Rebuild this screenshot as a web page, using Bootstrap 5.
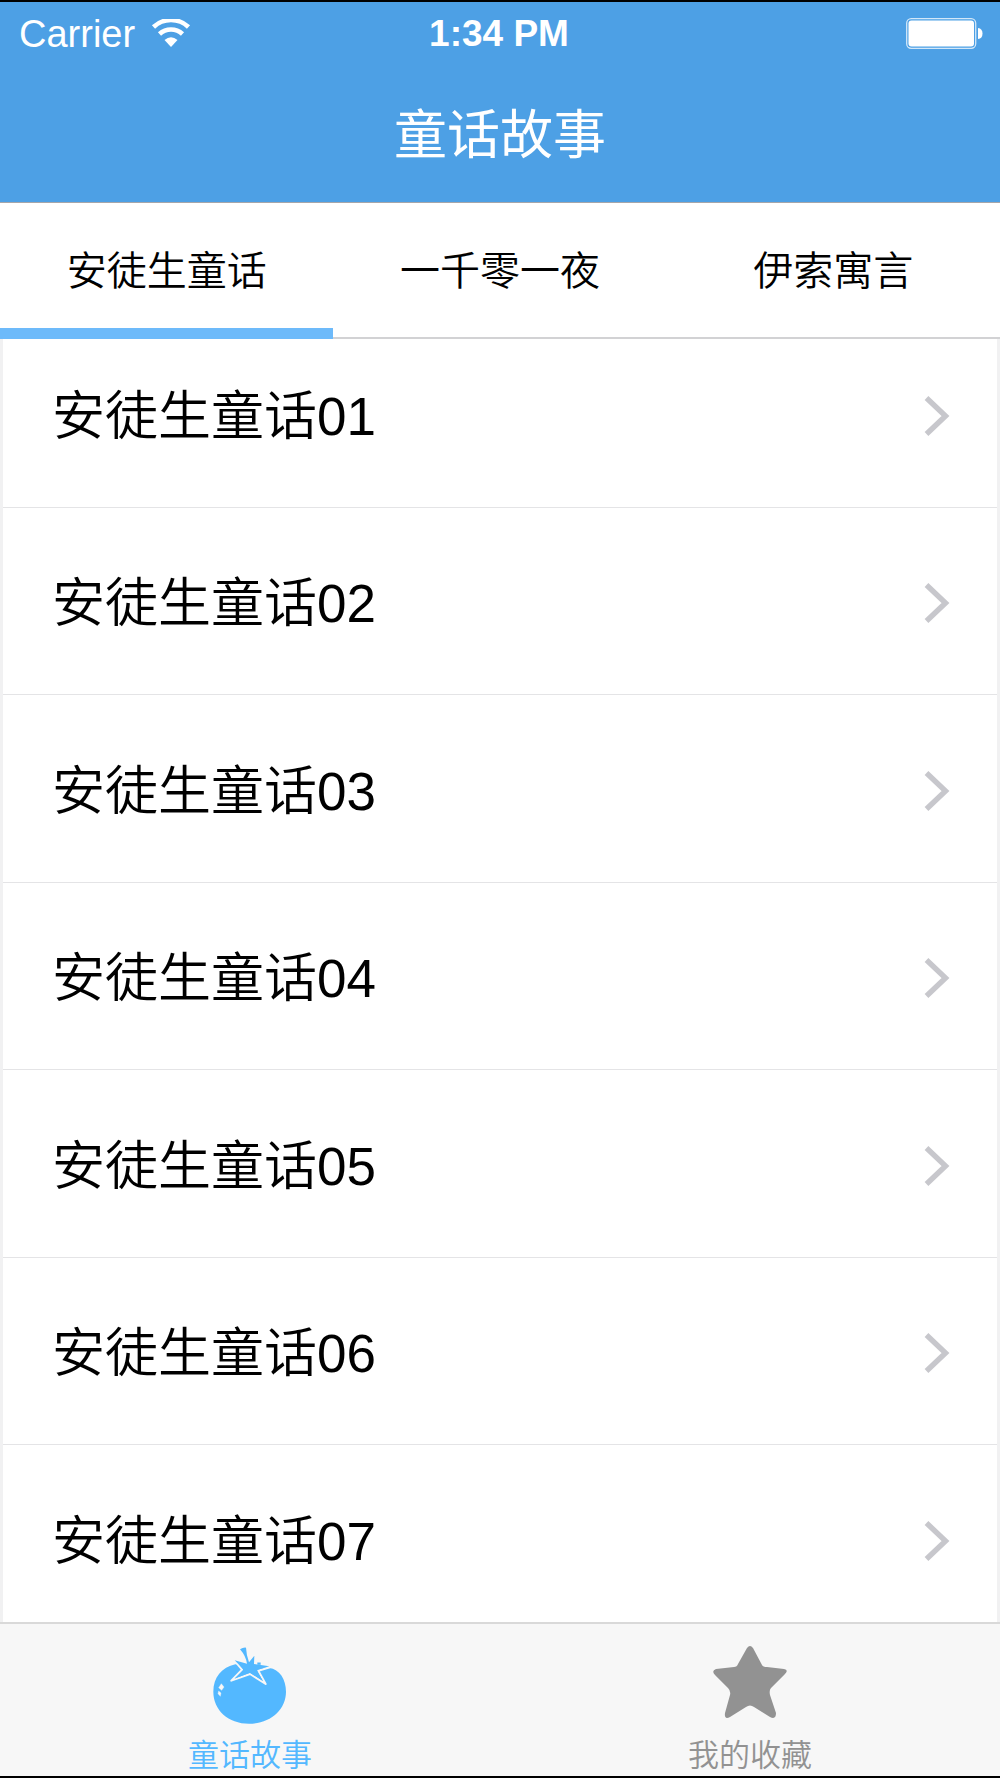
<!DOCTYPE html>
<html lang="zh-CN">
<head>
<meta charset="utf-8">
<meta name="viewport" content="width=device-width, initial-scale=1">
<title>童话故事</title>
<link href="https://cdn.jsdelivr.net/npm/bootstrap@5.3.0/dist/css/bootstrap.min.css" rel="stylesheet">
<style>
body { font-family: "Liberation Sans", "Noto Sans CJK SC", sans-serif; color: #000; background: #fff; }
.app-shell { border-top: 2px solid #000; border-bottom: 2px solid #000; }
.app-header { background: #4da0e5; border-bottom: 1px solid #a6a6aa; }
.status-row { height: 64px; font-size: 37px; line-height: 64px; padding: 0 17px 0 19px; }
.carrier-name { font-size: 38px; }
.status-row svg { display: block; }
.app-title { font-size: 53px; line-height: 64px; padding: 38px 0 34px; font-weight: 400; }
.story-tabs { border-bottom: 2px solid #d2d2d4; }
.story-tab { height: 134px; padding: 2px 0 0; border: 0; background: none; color: #000; font-size: 40px; line-height: 48px; font-weight: 350; }
.story-tab.active { box-shadow: inset 0 -9px #6dbafa; border-bottom: 2px solid #6dbafa; height: 136px; margin-bottom: -2px; }
/* The list is shown scrolled a little way down */
.story-list { border: solid #f1f1f2; border-width: 0 3px; font-weight: 350; }
.story-link { height: 187px; padding: 6px 47px 0 49px; border-bottom: 1px solid #e4e4e6; color: #000; font-size: 53px; line-height: 64px; }
.story-link:nth-child(odd) { height: 188px; }
.story-link:first-child { margin-top: -19px; }
.tab-bar { background: #f7f7f7; border-top: 2px solid #d9d9d9; height: 154px; }
.tab-bar a { color: #929292; font-size: 31px; line-height: 36px; padding-top: 21px; gap: 13px; font-weight: 350; }
.tab-bar a.active { color: #53b8ff; }
</style>
<script src="https://cdn.jsdelivr.net/npm/bootstrap@5.3.0/dist/js/bootstrap.bundle.min.js"></script>
</head>
<body>
<svg class="d-none" aria-hidden="true">
  <symbol id="chevron" viewBox="0 0 26 42"><path d="M2.500 2L21.500 20L2.500 38" fill="none" stroke="#c7c7cc" stroke-width="5.400"/></symbol>
</svg>
<div class="app-shell vh-100 d-flex flex-column overflow-hidden">
  <header class="app-header text-white flex-shrink-0">
    <div class="status-row row g-0 align-items-center">
      <div class="col d-flex align-items-center gap-3">
        <span class="carrier-name">Carrier</span>
        <svg width="40" height="30" viewBox="0 0 40 30" aria-hidden="true">
          <path d="M2.500 8A25.500 25.500 0 0 1 37.500 8M8.500 15A17 17 0 0 1 31.500 15" fill="none" stroke="#fff" stroke-width="4.600"/>
          <path d="M13.500 21Q20 15.500 26.500 21L20 28Z" fill="#fff"/>
        </svg>
      </div>
      <div class="col-auto fw-bold pe-1">1:34 PM</div>
      <div class="col d-flex justify-content-end">
        <svg width="77" height="33" viewBox="0 0 77 33" aria-label="Battery">
          <rect x=".7" y=".7" width="69" height="29.600" rx="4.500" fill="none" stroke="#fff" stroke-opacity=".75" stroke-width="1.300"/>
          <rect x="2.500" y="2.500" width="65.500" height="26" rx="3" fill="#fff"/>
          <path d="M72 10Q76.500 10.500 76.500 15.500T72 21Z" fill="#fff"/>
        </svg>
      </div>
    </div>
    <h1 class="app-title text-center m-0">童话故事</h1>
  </header>

  <nav class="story-tabs d-flex flex-shrink-0" aria-label="故事分类">
    <button type="button" class="story-tab active col-4">安徒生童话</button>
    <button type="button" class="story-tab col-4">一千零一夜</button>
    <button type="button" class="story-tab col-4">伊索寓言</button>
  </nav>

  <main class="story-list flex-fill overflow-hidden">
    <a href="#" class="story-link d-flex align-items-center justify-content-between text-decoration-none">安徒生童话01<svg width="26" height="42" aria-hidden="true"><use href="#chevron"/></svg></a>
    <a href="#" class="story-link d-flex align-items-center justify-content-between text-decoration-none">安徒生童话02<svg width="26" height="42" aria-hidden="true"><use href="#chevron"/></svg></a>
    <a href="#" class="story-link d-flex align-items-center justify-content-between text-decoration-none">安徒生童话03<svg width="26" height="42" aria-hidden="true"><use href="#chevron"/></svg></a>
    <a href="#" class="story-link d-flex align-items-center justify-content-between text-decoration-none">安徒生童话04<svg width="26" height="42" aria-hidden="true"><use href="#chevron"/></svg></a>
    <a href="#" class="story-link d-flex align-items-center justify-content-between text-decoration-none">安徒生童话05<svg width="26" height="42" aria-hidden="true"><use href="#chevron"/></svg></a>
    <a href="#" class="story-link d-flex align-items-center justify-content-between text-decoration-none">安徒生童话06<svg width="26" height="42" aria-hidden="true"><use href="#chevron"/></svg></a>
    <a href="#" class="story-link d-flex align-items-center justify-content-between text-decoration-none">安徒生童话07<svg width="26" height="42" aria-hidden="true"><use href="#chevron"/></svg></a>
  </main>

  <nav class="tab-bar d-flex flex-shrink-0" aria-label="主导航">
    <a href="#" class="active col-6 d-flex flex-column align-items-center text-decoration-none" aria-current="page">
      <svg width="76" height="80" viewBox="96 105 228 240" aria-hidden="true">
        <path d="M100 245C100 203 125 172 166 163L268 174C298 177 318 208 318 245C318 300 270 341 207 341C145 341 100 300 100 245Z" fill="#53b8ff"/>
        <path d="M163 151L186 179L154 212L210 192L257 222L235 182L270 172" fill="none" stroke="#f7f7f7" stroke-width="6" stroke-linejoin="round"/>
        <path d="M190 150L266 150L266 168L190 168Z" fill="#f7f7f7"/>
        <path d="M180 118Q189 112 198 113Q199 134 207 157L223 137L222 162L268 169L230 180L249 213L210 188L163 206L192 180L164 151L201 161Q197 137 180 118Z" fill="#53b8ff"/>
        <path d="M232 161H242" stroke="#53b8ff" stroke-width="7"/>
        <path d="M124 221L132 231L125 241L116 233ZM116 243L123 249L121 259L114 251Z" fill="#f7f7f7" stroke="#f7f7f7" stroke-linejoin="round"/>
      </svg>
      <span>童话故事</span>
    </a>
    <a href="#" class="col-6 d-flex flex-column align-items-center text-decoration-none">
      <svg width="76" height="80" viewBox="0 0 76 80" aria-hidden="true">
        <path d="M35 3Q38-1 41 3L50 20Q51 22 55 22L72 24Q77 25 73 29L59 43Q57 45 58 50L64 68Q64 75 58 72L42 62Q38 59 34 62L18 72Q12 75 13 68L18 50Q19 46 16 43L3 30Q-1 26 4 24L22 22Q25 22 26 19Z" fill="#929292"/>
      </svg>
      <span>我的收藏</span>
    </a>
  </nav>
</div>
</body>
</html>
